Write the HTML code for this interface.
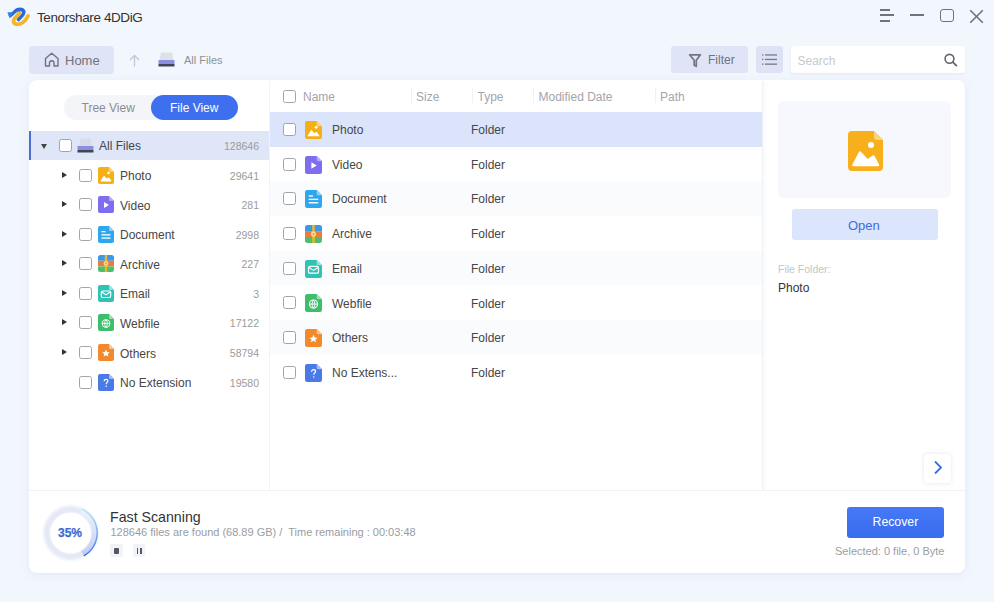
<!DOCTYPE html>
<html><head><meta charset="utf-8">
<style>
*{margin:0;padding:0;box-sizing:border-box}
html,body{width:994px;height:602px;overflow:hidden}
body{background:#f2f7fd;font-family:"Liberation Sans",sans-serif;position:relative;color:#333}
.a{position:absolute}
.t{position:absolute;line-height:1;white-space:nowrap}
.card{position:absolute;left:29px;top:80px;width:936px;height:493px;background:#fff;border-radius:8px;box-shadow:0 2px 9px rgba(195,210,235,.35)}
.cb{position:absolute;width:13px;height:13px;border:1.3px solid #a2a4aa;border-radius:2.5px;background:#fff}
.tri-r{position:absolute;width:0;height:0;border-top:3.5px solid transparent;border-bottom:3.5px solid transparent;border-left:5px solid #333}
.tri-d{position:absolute;width:0;height:0;border-left:3.5px solid transparent;border-right:3.5px solid transparent;border-top:5px solid #444}
.tn{font-size:12px;color:#464646}
.cnt{font-size:10.5px;color:#9b9b9b;text-align:right}
.fn{font-size:12px;color:#464646}
.hd{font-size:12px;color:#a3a5ab}
.sep{position:absolute;top:88px;width:1px;height:15px;background:#f0f1f4}
</style></head><body>

<!-- title bar -->
<svg class="a" style="left:1px;top:0.5px" width="32" height="30" viewBox="0 0 32 30">
  <path d="M18.5 12 L13.5 17.5 C11.5 20 12.5 23.3 16.2 23.3 C20.2 23.3 24.5 20 27 15" fill="none" stroke="#f1b52f" stroke-width="3.8" stroke-linecap="round"/>
  <path d="M9.5 14.5 L14.5 10 C17 8 21 7.6 22.6 10 C23.8 12 21.5 14.8 17.5 18.5" fill="none" stroke="#2a6bdc" stroke-width="3.6" stroke-linecap="round"/>
  <path d="M6.3 11.3 L12.5 11.3 L8.8 17.6 Z" fill="#2a86e4"/>
</svg>
<div class="t" style="left:37px;top:10.8px;font-size:13.5px;letter-spacing:-0.4px;color:#333">Tenorshare 4DDiG</div>

<!-- window controls -->
<div class="a" style="left:880px;top:8.8px;width:10px;height:2px;background:#70737d"></div>
<div class="a" style="left:880px;top:14.4px;width:14px;height:2px;background:#70737d"></div>
<div class="a" style="left:880px;top:19.7px;width:9.5px;height:2px;background:#70737d"></div>
<div class="a" style="left:910px;top:14.4px;width:14px;height:2px;background:#70737d"></div>
<div class="a" style="left:940px;top:8.5px;width:13.5px;height:13.5px;border:1.9px solid #70737d;border-radius:3px"></div>
<svg class="a" style="left:969px;top:8.5px" width="15" height="15" viewBox="0 0 15 15"><path d="M1.2 1.2 L13.8 13.8 M13.8 1.2 L1.2 13.8" stroke="#70737d" stroke-width="1.6"/></svg>

<!-- toolbar -->
<div class="a" style="left:29px;top:46px;width:85px;height:27.5px;background:#dfe4f7;border-radius:4px"></div>
<svg class="a" style="left:44px;top:52px" width="16" height="15" viewBox="0 0 16 15"><path d="M1.5 14 V6.5 L7.7 1.2 L14 6.5 V14 H10 V11 A2.25 2.25 0 0 0 5.5 11 V14 Z" fill="none" stroke="#6f7280" stroke-width="1.4" stroke-linejoin="round"/></svg>
<div class="t" style="left:65px;top:54.2px;font-size:13px;color:#6f7280">Home</div>
<svg class="a" style="left:129px;top:54px" width="11" height="13" viewBox="0 0 11 13"><path d="M5.5 12.5 V1.5 M1 6 L5.5 1.5 L10 6" fill="none" stroke="#c4c7ce" stroke-width="1.3"/></svg>
<!-- drive icon -->
<svg class="a" style="left:158px;top:52px" width="17" height="15" viewBox="0 0 17 15">
  <path d="M3 0.5 H14 L15.5 8 H1.5 Z" fill="#dfe1e9"/>
  <rect x="0.5" y="8" width="16" height="4" fill="#8b8fe0"/>
  <rect x="0.5" y="12" width="16" height="2.5" fill="#3f4656"/>
</svg>
<div class="t" style="left:184px;top:54.8px;font-size:11px;color:#8d9098">All Files</div>

<div class="a" style="left:671px;top:46px;width:77px;height:27px;background:#dfe5f6;border-radius:3px"></div>
<svg class="a" style="left:688px;top:52.5px" width="14" height="15" viewBox="0 0 14 15"><path d="M1.6 1.8 H12.4 L8.3 7.3 V13.3 L6.2 12.2 V7.3 Z" fill="none" stroke="#727582" stroke-width="1.7" stroke-linejoin="round"/></svg>
<div class="t" style="left:708px;top:53.6px;font-size:12px;color:#6f7280">Filter</div>
<div class="a" style="left:756px;top:46px;width:27px;height:27px;background:#dde3f5;border-radius:3px"></div>
<svg class="a" style="left:762px;top:53px" width="15" height="13" viewBox="0 0 15 13">
  <g fill="#767986"><rect x="0" y="1.3" width="1.4" height="1.3"/><rect x="3" y="1.3" width="12" height="1.3"/>
  <rect x="0" y="5.8" width="1.4" height="1.3"/><rect x="3" y="5.8" width="12" height="1.3"/>
  <rect x="0" y="10.5" width="1.4" height="1.3"/><rect x="3" y="10.5" width="12" height="1.3"/></g>
</svg>
<div class="a" style="left:791px;top:46px;width:174px;height:27px;background:#fff;border-radius:3px;box-shadow:0 1px 3px rgba(190,200,225,.3)"></div>
<div class="t" style="left:797.5px;top:54.5px;font-size:12px;color:#c7c9cf">Search</div>
<svg class="a" style="left:943px;top:53px" width="16" height="14" viewBox="0 0 16 14"><circle cx="6.5" cy="5.8" r="4.4" fill="none" stroke="#62656e" stroke-width="1.6"/><path d="M9.8 9.1 L13.4 12.6" stroke="#62656e" stroke-width="1.8" stroke-linecap="round"/></svg>

<!-- main card -->
<div class="card"></div>

<!-- tree panel -->
<div class="a" style="left:64px;top:94.5px;width:174px;height:25.5px;background:#f4f5f8;border-radius:13px"></div>
<div class="t" style="left:81.5px;top:102px;font-size:12px;color:#8b8d94">Tree View</div>
<div class="a" style="left:151px;top:95px;width:87px;height:24.5px;background:#3d6fee;border-radius:12.5px"></div>
<div class="t" style="left:170px;top:101.8px;font-size:12px;color:#fff">File View</div>

<div class="a" style="left:29px;top:131px;width:240px;height:29px;background:#dee6f8"></div>
<div class="a" style="left:29px;top:131px;width:2px;height:29px;background:#4a6fcf"></div>
<div class="tri-d" style="left:40.5px;top:143.5px"></div>
<div class="cb" style="left:59px;top:139px"></div>
<svg class="a" style="left:77px;top:138px" width="17" height="15" viewBox="0 0 17 15">
  <path d="M3.5 0.5 H13.5 L15 8 H2 Z" fill="#d9dce5"/>
  <rect x="0.5" y="8" width="16" height="4" fill="#8b8fe0"/>
  <rect x="0.5" y="12" width="16" height="2.5" fill="#3f4656"/>
</svg>
<div class="t tn" style="left:99px;top:140.2px">All Files</div>
<div class="t cnt" style="left:200px;top:141px;width:59px">128646</div>

<div class="tri-r" style="left:62px;top:171.6px"></div>
<div class="cb" style="left:79px;top:168.6px"></div>
<svg class="a" style="left:98px;top:166.6px" width="16" height="17" viewBox="0 0 16 17"><path d="M2 0 H11 L16 5 V15 a2 2 0 0 1 -2 2 H2 a2 2 0 0 1 -2 -2 V2 a2 2 0 0 1 2 -2 Z" fill="#f5b016"/><path d="M11 0 L16 5 H12.5 a1.5 1.5 0 0 1 -1.5 -1.5Z" fill="#fad37e"/><circle cx="10.5" cy="6" r="1.3" fill="#fff"/><path d="M3 14 L6 9.2 L9 12.3 L10.8 10.8 L13 14Z" fill="#fff" stroke="#fff" stroke-width="1" stroke-linejoin="round"/></svg>
<div class="t tn" style="left:120px;top:170.2px">Photo</div>
<div class="t cnt" style="left:200px;top:170.6px;width:59px">29641</div>
<div class="tri-r" style="left:62px;top:201.1px"></div>
<div class="cb" style="left:79px;top:198.1px"></div>
<svg class="a" style="left:98px;top:196.1px" width="16" height="17" viewBox="0 0 16 17"><path d="M2 0 H11 L16 5 V15 a2 2 0 0 1 -2 2 H2 a2 2 0 0 1 -2 -2 V2 a2 2 0 0 1 2 -2 Z" fill="#7f6df0"/><path d="M11 0 L16 5 H12.5 a1.5 1.5 0 0 1 -1.5 -1.5Z" fill="#b3a8f7"/><path d="M6 6 L11 9 L6 12Z" fill="#fff"/></svg>
<div class="t tn" style="left:120px;top:199.7px">Video</div>
<div class="t cnt" style="left:200px;top:200.1px;width:59px">281</div>
<div class="tri-r" style="left:62px;top:230.7px"></div>
<div class="cb" style="left:79px;top:227.7px"></div>
<svg class="a" style="left:98px;top:225.7px" width="16" height="17" viewBox="0 0 16 17"><path d="M2 0 H11 L16 5 V15 a2 2 0 0 1 -2 2 H2 a2 2 0 0 1 -2 -2 V2 a2 2 0 0 1 2 -2 Z" fill="#2fa7ee"/><path d="M11 0 L16 5 H12.5 a1.5 1.5 0 0 1 -1.5 -1.5Z" fill="#8fd0f7"/><g fill="#fff"><rect x="3.5" y="5" width="4" height="1.3"/><rect x="3.5" y="8.2" width="9" height="1.3"/><rect x="3.5" y="11.4" width="9" height="1.3"/></g></svg>
<div class="t tn" style="left:120px;top:229.3px">Document</div>
<div class="t cnt" style="left:200px;top:229.7px;width:59px">2998</div>
<div class="tri-r" style="left:62px;top:260.2px"></div>
<div class="cb" style="left:79px;top:257.2px"></div>
<svg class="a" style="left:98px;top:255.2px" width="16" height="17" viewBox="0 0 16 17"><path d="M2.5 0 H13.5 a2.5 2.5 0 0 1 2.5 2.5 V5.8 H0 V2.5 a2.5 2.5 0 0 1 2.5 -2.5Z" fill="#3a9ae9"/><rect x="0" y="5.8" width="16" height="5.6" fill="#ea7d3e"/><path d="M0 11.4 H16 V14.5 a2.5 2.5 0 0 1 -2.5 2.5 H2.5 a2.5 2.5 0 0 1 -2.5 -2.5Z" fill="#4cbf6c"/><rect x="6.8" y="0" width="2.4" height="17" fill="#f3b52a"/><circle cx="8" cy="8.6" r="2.4" fill="#f8dc8a"/><circle cx="8" cy="8.6" r="1" fill="#e9a72a"/></svg>
<div class="t tn" style="left:120px;top:258.8px">Archive</div>
<div class="t cnt" style="left:200px;top:259.2px;width:59px">227</div>
<div class="tri-r" style="left:62px;top:289.8px"></div>
<div class="cb" style="left:79px;top:286.8px"></div>
<svg class="a" style="left:98px;top:284.8px" width="16" height="17" viewBox="0 0 16 17"><path d="M2 0 H11 L16 5 V15 a2 2 0 0 1 -2 2 H2 a2 2 0 0 1 -2 -2 V2 a2 2 0 0 1 2 -2 Z" fill="#2ec3b5"/><path d="M11 0 L16 5 H12.5 a1.5 1.5 0 0 1 -1.5 -1.5Z" fill="#95e2db"/><rect x="3.3" y="6" width="9.4" height="6.5" rx="1.5" fill="none" stroke="#fff" stroke-width="1.2"/><path d="M3.8 7 L8 9.8 L12.2 7" fill="none" stroke="#fff" stroke-width="1.1"/></svg>
<div class="t tn" style="left:120px;top:288.4px">Email</div>
<div class="t cnt" style="left:200px;top:288.8px;width:59px">3</div>
<div class="tri-r" style="left:62px;top:319.4px"></div>
<div class="cb" style="left:79px;top:316.4px"></div>
<svg class="a" style="left:98px;top:314.4px" width="16" height="17" viewBox="0 0 16 17"><path d="M2 0 H11 L16 5 V15 a2 2 0 0 1 -2 2 H2 a2 2 0 0 1 -2 -2 V2 a2 2 0 0 1 2 -2 Z" fill="#3ebd6a"/><path d="M11 0 L16 5 H12.5 a1.5 1.5 0 0 1 -1.5 -1.5Z" fill="#9fdeb4"/><circle cx="8" cy="9.5" r="3.8" fill="none" stroke="#fff" stroke-width="1.1"/><path d="M4.2 9.5 H11.8 M8 5.7 C6.2 8 6.2 11 8 13.3 C9.8 11 9.8 8 8 5.7" fill="none" stroke="#fff" stroke-width="0.9"/></svg>
<div class="t tn" style="left:120px;top:318.0px">Webfile</div>
<div class="t cnt" style="left:200px;top:318.4px;width:59px">17122</div>
<div class="tri-r" style="left:62px;top:348.9px"></div>
<div class="cb" style="left:79px;top:345.9px"></div>
<svg class="a" style="left:98px;top:343.9px" width="16" height="17" viewBox="0 0 16 17"><path d="M2 0 H11 L16 5 V15 a2 2 0 0 1 -2 2 H2 a2 2 0 0 1 -2 -2 V2 a2 2 0 0 1 2 -2 Z" fill="#f28a2d"/><path d="M11 0 L16 5 H12.5 a1.5 1.5 0 0 1 -1.5 -1.5Z" fill="#f8c493"/><path d="M8 5.5 L9.1 8 L11.8 8.2 L9.8 10 L10.4 12.6 L8 11.2 L5.6 12.6 L6.2 10 L4.2 8.2 L6.9 8 Z" fill="#fff"/></svg>
<div class="t tn" style="left:120px;top:347.5px">Others</div>
<div class="t cnt" style="left:200px;top:347.9px;width:59px">58794</div>
<div class="cb" style="left:79px;top:375.5px"></div>
<svg class="a" style="left:98px;top:373.5px" width="16" height="17" viewBox="0 0 16 17"><path d="M2 0 H11 L16 5 V15 a2 2 0 0 1 -2 2 H2 a2 2 0 0 1 -2 -2 V2 a2 2 0 0 1 2 -2 Z" fill="#4a7ae7"/><path d="M11 0 L16 5 H12.5 a1.5 1.5 0 0 1 -1.5 -1.5Z" fill="#a3bcf3"/><path d="M6.2 7.3 C6.2 5.9 7.1 5.3 8 5.3 C9.1 5.3 9.9 6 9.9 7 C9.9 8.3 8.2 8.6 8.2 10.2" fill="none" stroke="#fff" stroke-width="1.2"/><circle cx="8.2" cy="12.3" r="0.75" fill="#fff"/></svg>
<div class="t tn" style="left:120px;top:377.1px">No Extension</div>
<div class="t cnt" style="left:200px;top:377.5px;width:59px">19580</div>

<!-- dividers -->
<div class="a" style="left:269px;top:81px;width:1px;height:409px;background:#f2f3f6"></div>
<div class="a" style="left:762px;top:81px;width:1px;height:409px;background:#f1f2f5"></div><div class="a" style="left:763px;top:81px;width:4px;height:409px;background:linear-gradient(90deg,#f8f9fb,#fff)"></div>
<div class="a" style="left:29px;top:489.5px;width:936px;height:1px;background:#eff1f5"></div>

<!-- file list header -->
<div class="cb" style="left:283px;top:90px"></div>
<div class="t hd" style="left:303px;top:90.9px">Name</div>
<div class="sep" style="left:411px"></div>
<div class="t hd" style="left:416px;top:90.9px">Size</div>
<div class="sep" style="left:472px"></div>
<div class="t hd" style="left:477.5px;top:90.9px">Type</div>
<div class="sep" style="left:533px"></div>
<div class="t hd" style="left:538.5px;top:90.9px">Modified Date</div>
<div class="sep" style="left:655px"></div>
<div class="t hd" style="left:660px;top:90.9px">Path</div>

<div class="a" style="left:270px;top:112.0px;width:492px;height:34.7px;background:#dbe4fa"></div>
<div class="cb" style="left:283px;top:122.8px"></div>
<svg class="a" style="left:305px;top:120.8px" width="17" height="18" viewBox="0 0 16 17" preserveAspectRatio="none"><path d="M2 0 H11 L16 5 V15 a2 2 0 0 1 -2 2 H2 a2 2 0 0 1 -2 -2 V2 a2 2 0 0 1 2 -2 Z" fill="#f5b016"/><path d="M11 0 L16 5 H12.5 a1.5 1.5 0 0 1 -1.5 -1.5Z" fill="#fad37e"/><circle cx="10.5" cy="6" r="1.3" fill="#fff"/><path d="M3 14 L6 9.2 L9 12.3 L10.8 10.8 L13 14Z" fill="#fff" stroke="#fff" stroke-width="1" stroke-linejoin="round"/></svg>
<div class="t fn" style="left:332px;top:124.0px">Photo</div>
<div class="t fn" style="left:471px;top:124.0px">Folder</div>
<div class="cb" style="left:283px;top:157.5px"></div>
<svg class="a" style="left:305px;top:155.5px" width="17" height="18" viewBox="0 0 16 17" preserveAspectRatio="none"><path d="M2 0 H11 L16 5 V15 a2 2 0 0 1 -2 2 H2 a2 2 0 0 1 -2 -2 V2 a2 2 0 0 1 2 -2 Z" fill="#7f6df0"/><path d="M11 0 L16 5 H12.5 a1.5 1.5 0 0 1 -1.5 -1.5Z" fill="#b3a8f7"/><path d="M6 6 L11 9 L6 12Z" fill="#fff"/></svg>
<div class="t fn" style="left:332px;top:158.7px">Video</div>
<div class="t fn" style="left:471px;top:158.7px">Folder</div>
<div class="a" style="left:270px;top:181.4px;width:492px;height:34.7px;background:#fafbfd"></div>
<div class="cb" style="left:283px;top:192.2px"></div>
<svg class="a" style="left:305px;top:190.2px" width="17" height="18" viewBox="0 0 16 17" preserveAspectRatio="none"><path d="M2 0 H11 L16 5 V15 a2 2 0 0 1 -2 2 H2 a2 2 0 0 1 -2 -2 V2 a2 2 0 0 1 2 -2 Z" fill="#2fa7ee"/><path d="M11 0 L16 5 H12.5 a1.5 1.5 0 0 1 -1.5 -1.5Z" fill="#8fd0f7"/><g fill="#fff"><rect x="3.5" y="5" width="4" height="1.3"/><rect x="3.5" y="8.2" width="9" height="1.3"/><rect x="3.5" y="11.4" width="9" height="1.3"/></g></svg>
<div class="t fn" style="left:332px;top:193.4px">Document</div>
<div class="t fn" style="left:471px;top:193.4px">Folder</div>
<div class="cb" style="left:283px;top:227.0px"></div>
<svg class="a" style="left:305px;top:225.0px" width="17" height="18" viewBox="0 0 16 17" preserveAspectRatio="none"><path d="M2.5 0 H13.5 a2.5 2.5 0 0 1 2.5 2.5 V5.8 H0 V2.5 a2.5 2.5 0 0 1 2.5 -2.5Z" fill="#3a9ae9"/><rect x="0" y="5.8" width="16" height="5.6" fill="#ea7d3e"/><path d="M0 11.4 H16 V14.5 a2.5 2.5 0 0 1 -2.5 2.5 H2.5 a2.5 2.5 0 0 1 -2.5 -2.5Z" fill="#4cbf6c"/><rect x="6.8" y="0" width="2.4" height="17" fill="#f3b52a"/><circle cx="8" cy="8.6" r="2.4" fill="#f8dc8a"/><circle cx="8" cy="8.6" r="1" fill="#e9a72a"/></svg>
<div class="t fn" style="left:332px;top:228.2px">Archive</div>
<div class="t fn" style="left:471px;top:228.2px">Folder</div>
<div class="a" style="left:270px;top:250.8px;width:492px;height:34.7px;background:#fafbfd"></div>
<div class="cb" style="left:283px;top:261.7px"></div>
<svg class="a" style="left:305px;top:259.7px" width="17" height="18" viewBox="0 0 16 17" preserveAspectRatio="none"><path d="M2 0 H11 L16 5 V15 a2 2 0 0 1 -2 2 H2 a2 2 0 0 1 -2 -2 V2 a2 2 0 0 1 2 -2 Z" fill="#2ec3b5"/><path d="M11 0 L16 5 H12.5 a1.5 1.5 0 0 1 -1.5 -1.5Z" fill="#95e2db"/><rect x="3.3" y="6" width="9.4" height="6.5" rx="1.5" fill="none" stroke="#fff" stroke-width="1.2"/><path d="M3.8 7 L8 9.8 L12.2 7" fill="none" stroke="#fff" stroke-width="1.1"/></svg>
<div class="t fn" style="left:332px;top:262.9px">Email</div>
<div class="t fn" style="left:471px;top:262.9px">Folder</div>
<div class="cb" style="left:283px;top:296.4px"></div>
<svg class="a" style="left:305px;top:294.4px" width="17" height="18" viewBox="0 0 16 17" preserveAspectRatio="none"><path d="M2 0 H11 L16 5 V15 a2 2 0 0 1 -2 2 H2 a2 2 0 0 1 -2 -2 V2 a2 2 0 0 1 2 -2 Z" fill="#3ebd6a"/><path d="M11 0 L16 5 H12.5 a1.5 1.5 0 0 1 -1.5 -1.5Z" fill="#9fdeb4"/><circle cx="8" cy="9.5" r="3.8" fill="none" stroke="#fff" stroke-width="1.1"/><path d="M4.2 9.5 H11.8 M8 5.7 C6.2 8 6.2 11 8 13.3 C9.8 11 9.8 8 8 5.7" fill="none" stroke="#fff" stroke-width="0.9"/></svg>
<div class="t fn" style="left:332px;top:297.6px">Webfile</div>
<div class="t fn" style="left:471px;top:297.6px">Folder</div>
<div class="a" style="left:270px;top:320.2px;width:492px;height:34.7px;background:#fafbfd"></div>
<div class="cb" style="left:283px;top:331.1px"></div>
<svg class="a" style="left:305px;top:329.1px" width="17" height="18" viewBox="0 0 16 17" preserveAspectRatio="none"><path d="M2 0 H11 L16 5 V15 a2 2 0 0 1 -2 2 H2 a2 2 0 0 1 -2 -2 V2 a2 2 0 0 1 2 -2 Z" fill="#f28a2d"/><path d="M11 0 L16 5 H12.5 a1.5 1.5 0 0 1 -1.5 -1.5Z" fill="#f8c493"/><path d="M8 5.5 L9.1 8 L11.8 8.2 L9.8 10 L10.4 12.6 L8 11.2 L5.6 12.6 L6.2 10 L4.2 8.2 L6.9 8 Z" fill="#fff"/></svg>
<div class="t fn" style="left:332px;top:332.3px">Others</div>
<div class="t fn" style="left:471px;top:332.3px">Folder</div>
<div class="cb" style="left:283px;top:365.8px"></div>
<svg class="a" style="left:305px;top:363.8px" width="17" height="18" viewBox="0 0 16 17" preserveAspectRatio="none"><path d="M2 0 H11 L16 5 V15 a2 2 0 0 1 -2 2 H2 a2 2 0 0 1 -2 -2 V2 a2 2 0 0 1 2 -2 Z" fill="#4a7ae7"/><path d="M11 0 L16 5 H12.5 a1.5 1.5 0 0 1 -1.5 -1.5Z" fill="#a3bcf3"/><path d="M6.2 7.3 C6.2 5.9 7.1 5.3 8 5.3 C9.1 5.3 9.9 6 9.9 7 C9.9 8.3 8.2 8.6 8.2 10.2" fill="none" stroke="#fff" stroke-width="1.2"/><circle cx="8.2" cy="12.3" r="0.75" fill="#fff"/></svg>
<div class="t fn" style="left:332px;top:367.0px">No Extens...</div>
<div class="t fn" style="left:471px;top:367.0px">Folder</div>

<!-- preview -->
<div class="a" style="left:778px;top:101px;width:173px;height:97px;background:#f6f8fe;border-radius:6px"></div>
<svg class="a" style="left:848px;top:131px" width="36" height="40" viewBox="0 0 36 40">
  <path d="M4 0 H26 L35 9 V36 a4 4 0 0 1 -4 4 H4 a4 4 0 0 1 -4 -4 V4 a4 4 0 0 1 4 -4 Z" fill="#f7b01b"/>
  <path d="M26 0 L35 9 H29 a3 3 0 0 1 -3 -3 Z" fill="#fbd27a"/>
  <circle cx="23" cy="14" r="3" fill="#fff"/>
  <path d="M5.5 34 L12 21.5 L19.5 29.5 L25.5 25.5 L30 34 Z" fill="#fff" stroke="#fff" stroke-width="2.5" stroke-linejoin="round"/>
</svg>
<div class="a" style="left:791.5px;top:209px;width:146px;height:31px;background:#dbe5fc;border-radius:3px"></div>
<div class="t" style="left:848px;top:218.6px;font-size:13px;color:#3d6ed6">Open</div>
<div class="t" style="left:778px;top:264px;font-size:10.5px;color:#c4c6cb">File Folder:</div>
<div class="t" style="left:778px;top:282px;font-size:12px;color:#333">Photo</div>
<div class="a" style="left:923.5px;top:453.5px;width:27px;height:29px;background:#fff;border-radius:4px;box-shadow:0 0 4px rgba(200,205,220,.5)"></div>
<svg class="a" style="left:932px;top:460px" width="12" height="15" viewBox="0 0 12 15"><path d="M3 1.5 L9 7.5 L3 13.5" fill="none" stroke="#3d6ed6" stroke-width="1.8"/></svg>

<!-- bottom -->
<svg class="a" style="left:38px;top:500px" width="66" height="66" viewBox="0 0 66 66">
  <defs>
    <filter id="bl" x="-30%" y="-30%" width="160%" height="160%"><feGaussianBlur stdDeviation="1.6"/></filter>
    <linearGradient id="ag" x1="0" y1="0" x2="0" y2="1"><stop offset="0" stop-color="#b9ecf4"/><stop offset="1" stop-color="#3b6ee6"/></linearGradient>
    <linearGradient id="ag2" x1="0" y1="0" x2="0" y2="1"><stop offset="0" stop-color="#eef2fb"/><stop offset="1" stop-color="#c2cff2"/></linearGradient>
  </defs>
  <circle cx="32.6" cy="33" r="23.5" fill="none" stroke="#e4e8f6" stroke-width="7" filter="url(#bl)"/>
  <circle cx="32.6" cy="33" r="20.3" fill="#fff"/>
  <path d="M43.2 11.2 A23.8 23.8 0 0 1 44.5 53.6" fill="none" stroke="url(#ag2)" stroke-width="5.5"/>
  <path d="M43.8 9.0 A26.3 26.3 0 0 1 45.8 55.9" fill="none" stroke="url(#ag)" stroke-width="1.4"/>
</svg>
<div class="t" style="left:58px;top:527px;font-size:12px;font-weight:bold;color:#3d6bd0;-webkit-text-stroke:0.25px #3d6bd0">35%</div>
<div class="t" style="left:110px;top:510px;font-size:14.2px;color:#333">Fast Scanning</div>
<div class="t" style="left:110.5px;top:527px;font-size:11px;color:#9a9ca2">128646 files are found (68.89 GB) /&nbsp; Time remaining : 00:03:48</div>
<div class="a" style="left:110px;top:544px;width:12.7px;height:13px;background:#f1f3f9;border-radius:2px"></div>
<div class="a" style="left:113.6px;top:547.6px;width:5.5px;height:6.3px;background:#535763;border-radius:1px"></div>
<div class="a" style="left:133.2px;top:544px;width:12px;height:13px;background:#f1f3f9;border-radius:2px"></div>
<div class="a" style="left:136.8px;top:547.6px;width:1.6px;height:6.3px;background:#535763"></div>
<div class="a" style="left:140.1px;top:547.6px;width:1.7px;height:6.3px;background:#535763"></div>

<div class="a" style="left:847px;top:507px;width:97px;height:31px;background:linear-gradient(#4479f6,#3a6cee);border-radius:3px"></div>
<div class="t" style="left:872.5px;top:516.2px;font-size:12.3px;color:#fff">Recover</div>
<div class="t" style="left:835px;top:546px;font-size:11px;color:#9c9ea4">Selected: 0 file, 0 Byte</div>

</body></html>
